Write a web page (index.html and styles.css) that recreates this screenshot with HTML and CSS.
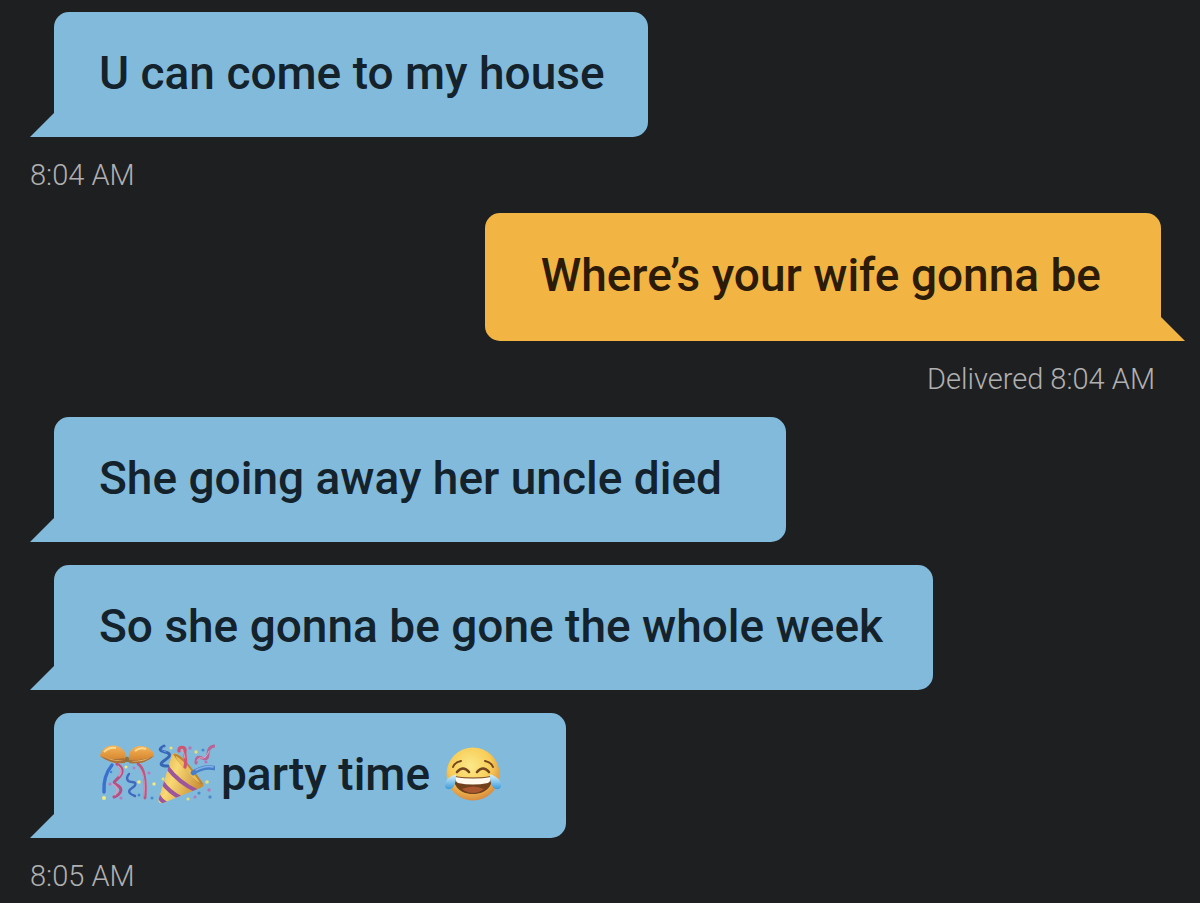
FILE: index.html
```html
<!DOCTYPE html>
<html lang="en">
<head>
<meta charset="utf-8">
<meta name="viewport" content="width=device-width, initial-scale=1">
<title>Messages</title>
<link rel="stylesheet" href="styles.css">
</head>
<body>
<main class="chat">
  <section class="group">
    <p class="bubble snug">U can come to my house</p>
    <time class="stamp">8:04 AM</time>
  </section>
  <section class="group sent">
    <p class="bubble">Where’s your wife gonna be</p>
    <p class="stamp">Delivered <time>8:04 AM</time></p>
  </section>
  <section class="group">
    <p class="bubble roomy">She going away her uncle died</p>
    <p class="bubble">So she gonna be gone the whole week</p>
    <p class="bubble roomy party">
      <svg class="emoji" viewBox="0 0 58 60" role="img" aria-label="Confetti ball">
        <defs>
          <linearGradient id="gold" x1="0" y1="0" x2="0" y2="1"><stop offset="0" stop-color="#f2b45c"/><stop offset=".6" stop-color="#df9238"/><stop offset="1" stop-color="#bd7a38"/></linearGradient>
        </defs>
        <g fill="none" stroke-linecap="round">
          <path d="M13 21Q4 32 5 48" stroke="#3b6fd0" stroke-width="3.4"/>
          <path d="M18 20c5 3 7 7 3 12s-9 6-3 9 5 9-3 12" stroke="#b84f83" stroke-width="3"/>
          <path d="M19 22c4 3 4 7 1 10M14 40c5 3 5 7 2 11" stroke="#e39abb" stroke-width="1.3"/>
          <path d="M30 30c-4 5-1 8 3 8s5 3 0 6-3 6 3 8" stroke="#4269bf" stroke-width="2.4"/>
          <path d="M39 20q9 5 7 34" stroke="#bd5683" stroke-width="2.8"/>
          <path d="M42 26q5 8 3 26" stroke="#dd8eae" stroke-width="1"/>
        </g>
        <path d="M1 12C2 5 9 0 18 2c7 2 11 9 8 17Q13 21 1 12Z" fill="url(#gold)"/>
        <path d="M1 12q10 5 24 2 2 2 1 5Q11 20 1 12Z" fill="#a9713a"/>
        <path d="M4 12q9 5 20 4-9 3-20-4Z" fill="#e9b566"/>
        <path d="M5 8q5-5 12-4" fill="none" stroke="#ffda8b" stroke-width="2"/>
        <path d="M30 19C28 9 33 2 41 2c8 0 14 5 14 10q-11 9-25 7Z" fill="url(#gold)"/>
        <path d="M30 16q13 1 25-4-10 9-25 7Z" fill="#a9713a"/>
        <path d="M32 17q11 0 20-4-9 6-20 4Z" fill="#e9b566"/>
        <path d="M36 7q5-4 11-2" fill="none" stroke="#ffda8b" stroke-width="2"/>
        <path d="M26 14q2-3 4 0v4h-4Z" fill="#8b7440"/>
        <g fill="#f4e97e"><circle cx="5" cy="54" r="2"/><circle cx="40" cy="38" r="1.8"/><circle cx="55" cy="40" r="1.7"/><circle cx="27" cy="23" r="1.5"/></g>
        <g fill="#b879bd"><circle cx="11" cy="40" r="1.6"/><circle cx="22" cy="54" r="1.6"/><circle cx="50" cy="29" r="1.5"/><circle cx="35" cy="24" r="1.4"/></g>
        <g fill="#438bcf"><circle cx="12" cy="28" r="1.3"/><circle cx="40" cy="51" r="1.5"/><circle cx="53" cy="54" r="1.5"/></g>
      </svg><svg class="emoji" viewBox="0 0 58 60" role="img" aria-label="Party popper">
        <defs>
          <linearGradient id="cone" x1="0" y1="0" x2="1" y2=".5"><stop offset="0" stop-color="#dda442"/><stop offset=".45" stop-color="#f8d974"/><stop offset="1" stop-color="#cb9138"/></linearGradient>
          <clipPath id="coneclip"><path d="M15 11q2-4 7 0l24 28q2 4-3 5L6 59q-6 1-4-5Z"/></clipPath>
        </defs>
        <path d="M15 11q2-4 7 0l24 28q2 4-3 5L6 59q-6 1-4-5Z" fill="url(#cone)"/>
        <g clip-path="url(#coneclip)" fill="none" stroke="#9d559c" stroke-width="4"><path d="M10 23Q22 39 40 47"/><path d="M5 38Q12 48 24 54"/><path d="M1 51q3 6 9 9"/></g>
        <path d="M16 10q5-3 17 12t13 18q-2 3-14-10T16 10Z" fill="#bd8636"/>
        <path d="M19 12q7 4 14 13t10 14q-5-2-15-13t-9-14Z" fill="#e9bd5a"/>
        <g fill="none" stroke-linecap="round">
          <path d="M7 2q-8 4 1 6t0 8 3 6" stroke="#3766b6" stroke-width="3"/>
          <path d="M7 3q-5 3 2 5" stroke="#6c9bdf" stroke-width="1"/>
          <path d="M28 23c2-7-1-11 0-16s-7-5-6 0" stroke="#d05573" stroke-width="3.2"/>
          <path d="M28 14q-1-6-3-8" stroke="#f49cab" stroke-width="1"/>
          <path d="M36 29q10-7 21-5" stroke="#477fc7" stroke-width="4.6"/>
          <path d="M39 26q10-5 17-3" stroke="#83b0e8" stroke-width="1.4"/>
          <path d="M39 19q0-8 6-5t6-4 6-8" stroke="#b76596" stroke-width="3"/>
          <path d="M40 17q1-4 5-3t7-7" stroke="#e5a2bd" stroke-width="1"/>
        </g>
        <g fill="#e9de77"><circle cx="14" cy="4" r="1.6"/><circle cx="39" cy="8" r="1.7"/><circle cx="50" cy="38" r="1.8"/><circle cx="31" cy="55" r="1.5"/><circle cx="6" cy="35" r="1.4"/></g>
        <g fill="#b575bb"><circle cx="33" cy="4" r="1.7"/><circle cx="49" cy="18" r="1.6"/><circle cx="52" cy="46" r="1.7"/><circle cx="38" cy="53" r="1.5"/></g>
        <g fill="#4e8ac9"><circle cx="46" cy="6" r="1.6"/><circle cx="53" cy="53" r="1.7"/><circle cx="42" cy="49" r="1.6"/></g>
      </svg><span>party time</span><svg class="emoji" viewBox="0 0 58 60" role="img" aria-label="Face with tears of joy">
        <defs>
          <radialGradient id="face" cx=".45" cy=".35" r=".65"><stop offset="0" stop-color="#fbe98a"/><stop offset=".6" stop-color="#f8cd57"/><stop offset="1" stop-color="#d98b3f"/></radialGradient>
          <linearGradient id="tear" x1="0" y1="0" x2="0" y2="1"><stop offset="0" stop-color="#d6f1fc"/><stop offset="1" stop-color="#3a9bd9"/></linearGradient>
        </defs>
        <circle cx="29" cy="30" r="26.5" fill="url(#face)"/>
        <g fill="none" stroke="#72451c" stroke-linecap="round"><path d="M9 23q2-5 8-6M41 17q6 1 8 6" stroke-width="2"/><path d="M13 28q6-7 12 0M33 28q6-7 12 0" stroke-width="2.6"/></g>
        <path d="M10 32q19 3 38 0c1 12-8 18-19 18S9 44 10 32Z" fill="#71401c"/>
        <path d="M11 33q18 3 36 0 0 4-3 6-15 3-30 0-3-2-3-6Z" fill="#fff9ee"/>
        <path d="M18 45q11-5 22 0-5 4-11 4t-11-4Z" fill="#a9582f"/>
        <path d="M10 31Q2 34 1 40t5 5 6-14q0-1-2 0Z" fill="url(#tear)"/>
        <path d="M48 31q8 3 9 9t-5 5-6-14q0-1 2 0Z" fill="url(#tear)"/>
      </svg>
    </p>
    <time class="stamp">8:05 AM</time>
  </section>
</main>
</body>
</html>
```
FILE: styles.css
```css
* {
  box-sizing: border-box;
}

body {
  margin: 0;
  background: #1e1f21;
  color: #b0b0b1;
  font-family: Roboto, "Liberation Sans", sans-serif;
}

.chat {
  display: flex;
  flex-direction: column;
  gap: 22px;
  padding: 12px 15px 8px 30px;
}

.group {
  display: flex;
  flex-direction: column;
  align-items: flex-start;
  gap: 22px;
}

.bubble {
  --fill: #82badb;
  position: relative;
  margin: 0 24px;
  padding: 31px 50px 34px 45px;
  border-radius: 15px 15px 15px 0;
  background: var(--fill);
  color: #14222c;
  font-size: 46px;
  font-weight: 500;
  line-height: 60px;
}

.bubble + .bubble {
  margin-top: 1px;
}

.bubble::before {
  content: "";
  position: absolute;
  right: 100%;
  bottom: 0;
  width: 24px;
  height: 24px;
  background: var(--fill);
  clip-path: polygon(100% 0, 100% 100%, 0 100%);
}

.snug {
  padding-right: 43px;
}

.roomy {
  padding-right: 64px;
}

.stamp {
  margin: 0;
  font-size: 29px;
  font-weight: 300;
  line-height: 32px;
}

.sent {
  align-items: flex-end;
}

.sent .bubble {
  --fill: #f2b544;
  padding: 32px 60px 36px 56px;
  border-radius: 15px 15px 0 15px;
  color: #2b1b08;
}

.sent .bubble::before {
  right: auto;
  left: 100%;
  clip-path: polygon(0 0, 100% 100%, 0 100%);
}

/* Squared corners meet the tail; the far side stays rounded. */
.sent .stamp {
  margin-right: 30px;
}

.party {
  display: flex;
  align-items: center;
}

.emoji {
  flex: none;
  width: 58px;
  height: 60px;
}

.party span {
  margin: 0 14px 0 6px;
}
```
